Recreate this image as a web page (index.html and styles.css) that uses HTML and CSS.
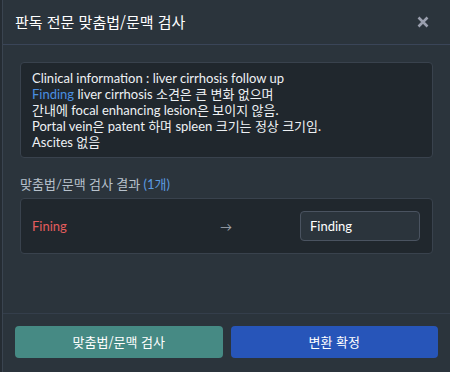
FILE: index.html
```html
<!DOCTYPE html>
<html lang="ko">
<head>
    <meta charset="UTF-8">
    <title>판독 전문 맞춤법/문맥 검사</title>
    <link rel="stylesheet" href="styles.css">
</head>
<body>
    <div class="dialog">
        <div class="dialog-header">
            <div class="dialog-title">판독 전문 맞춤법/문맥 검사</div>
            <div class="close-button">
                <svg width="12" height="12" viewBox="0 0 12 12">
                    <path d="M1.5 1.5 L10.5 10.5 M10.5 1.5 L1.5 10.5" stroke="#9a9fae" stroke-width="2.6" stroke-linecap="butt" />
                </svg>
            </div>
        </div>

        <div class="dialog-body">
            <div class="report-text">
                <div>Clinical information : liver cirrhosis follow up</div>
                <div><span class="highlight">Finding</span> liver cirrhosis 소견은 큰 변화 없으며</div>
                <div>간내에 focal enhancing lesion은 보이지 않음.</div>
                <div>Portal vein은 patent 하며 spleen 크기는 정상 크기임.</div>
                <div>Ascites 없음</div>
            </div>

            <div class="result-title">맞춤법/문맥 검사 결과 <span class="result-count">(1개)</span></div>
            <div class="result-list">
                <div class="result-item">
                    <div class="wrong-word">Fining</div>
                    <div class="arrow">&rarr;</div>
                    <input type="text" class="fix-input" value="Finding" />
                </div>
            </div>
        </div>

        <div class="dialog-footer">
            <div class="button button-check">맞춤법/문맥 검사</div>
            <div class="button button-confirm">변환 확정</div>
        </div>
    </div>
</body>
</html>
```

FILE: styles.css
```css
body {
    margin: 0;
    background-color: #252c33;
    font-family: Lato, 'Noto Sans CJK KR', sans-serif;
    font-size: 13px;
    color: #eef1f4;
}

.dialog {
    margin-left: 2px;
    height: 100vh;
    display: flex;
    flex-direction: column;
    background-color: #2b343c;
    border-left: 1px solid #3a4450;
    box-sizing: border-box;
}

.dialog-header {
    height: 44px;
    display: flex;
    align-items: center;
    justify-content: space-between;
    padding: 0 21px 0 12px;
    border-bottom: 1px solid #3a4558;
}

.dialog-title {
    font-family: 'Noto Sans CJK KR', sans-serif;
    font-size: 15px;
    color: #ffffff;
    padding-bottom: 2px;
}

.close-button {
    display: flex;
    cursor: pointer;
}

.dialog-body {
    flex: 1;
    padding: 17px;
}

.report-text {
    background-color: #20272d;
    border: 1px solid #39424d;
    border-radius: 4px;
    padding: 7px 11px;
    line-height: 16px;
}

.highlight {
    color: #4a8fe0;
}

.result-title {
    margin-top: 18px;
    margin-bottom: 6px;
    line-height: 16px;
    color: #b8c2cc;
}

.result-count {
    color: #5b9be0;
}

.result-list {
    background-color: #20272d;
    border: 1px solid #39424d;
    border-radius: 4px;
    padding: 12px 12px 12px 11px;
}

.result-item {
    display: grid;
    grid-template-columns: 1fr auto 1fr;
    align-items: center;
}

.wrong-word {
    color: #e35d5d;
}

.arrow {
    color: #a4abb3;
    font-size: 12px;
}

.fix-input {
    justify-self: end;
    width: 120px;
    height: 30px;
    box-sizing: border-box;
    padding: 0 9px;
    background-color: #2b343c;
    border: 1px solid #4a5360;
    border-radius: 4px;
    color: #ffffff;
    font-family: inherit;
    font-size: 13px;
    outline: none;
}

.dialog-footer {
    display: flex;
    gap: 8px;
    padding: 12px 12px 14px;
    border-top: 1px solid #343e4b;
}

.button {
    flex: 1;
    height: 32px;
    line-height: 32px;
    text-align: center;
    border-radius: 4px;
    color: #ffffff;
    font-family: 'Noto Sans CJK KR', sans-serif;
    font-size: 13px;
    cursor: pointer;
}

.button-check {
    background-color: #468a84;
}

.button-confirm {
    background-color: #2755b9;
}
```
